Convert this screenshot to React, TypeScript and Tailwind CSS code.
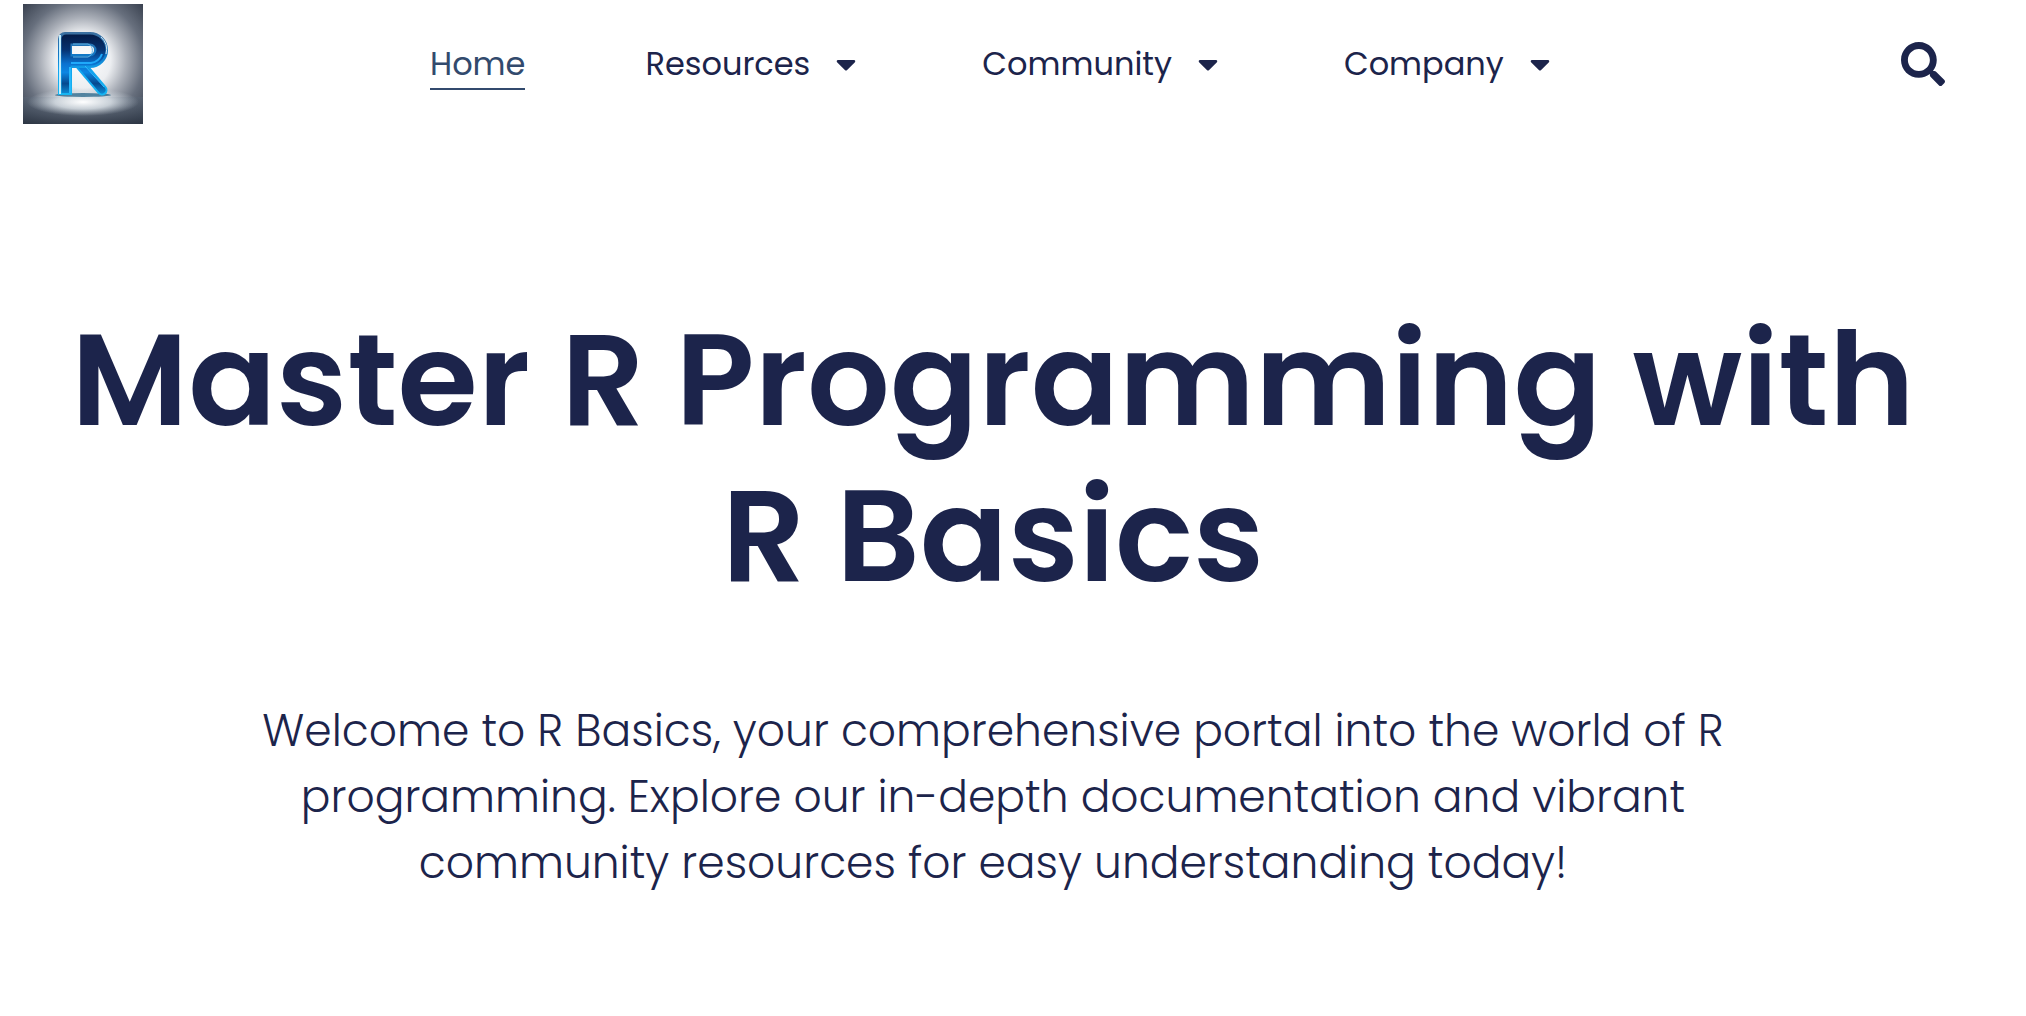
import { FaCaretDown, FaSearch } from 'react-icons/fa';

function Logo() {
  return (
    <svg viewBox="0 0 120 120" className="size-[120px]" role="img" aria-label="R Basics">
      <defs>
        <radialGradient id="glow" cx="0.5" cy="0.47" r="0.72">
          <stop offset="0" stopColor="#ffffff" />
          <stop offset="0.32" stopColor="#eceef1" />
          <stop offset="0.5" stopColor="#a9aeb7" />
          <stop offset="0.7" stopColor="#676f7d" />
          <stop offset="1" stopColor="#303846" />
        </radialGradient>
        <linearGradient id="floor" x1="0" y1="0" x2="0" y2="1">
          <stop offset="0" stopColor="#5d6b7c" stopOpacity="0.35" />
          <stop offset="1" stopColor="#2c3543" stopOpacity="0.8" />
        </linearGradient>
        <radialGradient id="shine">
          <stop offset="0" stopColor="#ffffff" />
          <stop offset="0.5" stopColor="#e6edf2" stopOpacity="0.75" />
          <stop offset="1" stopColor="#c9d3dc" stopOpacity="0" />
        </radialGradient>
        <linearGradient id="rim" gradientUnits="userSpaceOnUse" x1="0" y1="28" x2="0" y2="92">
          <stop offset="0" stopColor="#3c6f9f" />
          <stop offset="0.35" stopColor="#1176c4" />
          <stop offset="0.6" stopColor="#12a5f0" />
          <stop offset="1" stopColor="#16b6f2" />
        </linearGradient>
        <linearGradient id="glass" gradientUnits="userSpaceOnUse" x1="0" y1="30" x2="0" y2="92">
          <stop offset="0" stopColor="#031a45" />
          <stop offset="0.25" stopColor="#06316f" />
          <stop offset="0.48" stopColor="#0a72d0" />
          <stop offset="0.62" stopColor="#0c86e2" />
          <stop offset="0.8" stopColor="#05498f" />
          <stop offset="1" stopColor="#0e9be6" />
        </linearGradient>
      </defs>
      <rect width="120" height="120" fill="url(#glow)" />
      <rect y="93" width="120" height="27" fill="url(#floor)" />
      <ellipse cx="60" cy="98" rx="56" ry="14" fill="url(#shine)" />
      <ellipse cx="60" cy="91" rx="28" ry="2" fill="#175a80" opacity="0.7" />
      <g fill="none" strokeLinejoin="round">
        <path d="M57 60 L79 86" stroke="url(#rim)" strokeWidth="11" strokeLinecap="round" />
        <path d="M57 60 L79 86" stroke="url(#glass)" strokeWidth="7" strokeLinecap="round" />
        <path d="M42 91 V35 H67 A11 11 0 0 1 67 57 H46" stroke="url(#rim)" strokeWidth="14" />
        <path d="M43 89 V35 H67 A11 11 0 0 1 67 57 H46" stroke="url(#glass)" strokeWidth="9" />
        <path d="M37 90 V31" stroke="#c4efff" strokeWidth="2" />
        <path d="M47 89 V63" stroke="#25b8fb" strokeWidth="2" />
        <path d="M50 40 H65 A7 7 0 0 1 65 53 H50" stroke="#5fb4e6" strokeWidth="1" />
        <path d="M48 59 H68 A14 14 0 0 0 79 50" stroke="#1fa9fa" strokeWidth="2" />
        <path d="M78 33 A17 17 0 0 1 83 50" stroke="#cfe6f5" strokeWidth="1" />
        <path d="M62 62 L81 83" stroke="#2fbcff" strokeWidth="1" />
      </g>
    </svg>
  );
}

const menus = ['Resources', 'Community', 'Company'];

export default function App() {
  return (
    <div className="min-h-screen bg-white font-['Poppins','Inter',sans-serif] text-[#1c244b]">
      <header className="flex items-center py-1 pr-[81px] pl-[23px]">
        <a href="#home" className="shrink-0">
          <Logo />
        </a>
        <nav aria-label="Main" className="ml-[287px] flex items-center gap-[120px] text-[32px] leading-[52px]">
          <a href="#home" aria-current="page" className="relative text-[#324a6d] after:absolute after:inset-x-0 after:bottom-0 after:h-0.5 after:bg-[#324a6d]">
            Home
          </a>
          {menus.map((label) => (
            <button key={label} type="button" aria-haspopup="menu" className="flex items-center gap-[26px] pr-1.5">
              {label}
              <FaCaretDown className="h-8 w-5" />
            </button>
          ))}
        </nav>
        <button type="button" aria-label="Search" className="ml-auto">
          <FaSearch className="size-11" />
        </button>
      </header>
      <main className="flex flex-col items-center pt-[174px] pr-10 text-center">
        <h1 className="max-w-[1906px] text-[130px] leading-[156px] font-semibold">Master R Programming with R Basics</h1>
        <p className="mt-[84px] max-w-[1500px] text-[44px] leading-[66px] font-light">
          Welcome to R Basics, your comprehensive portal into the world of R programming. Explore our in-depth
          documentation and vibrant community resources for easy understanding today!
        </p>
      </main>
    </div>
  );
}
